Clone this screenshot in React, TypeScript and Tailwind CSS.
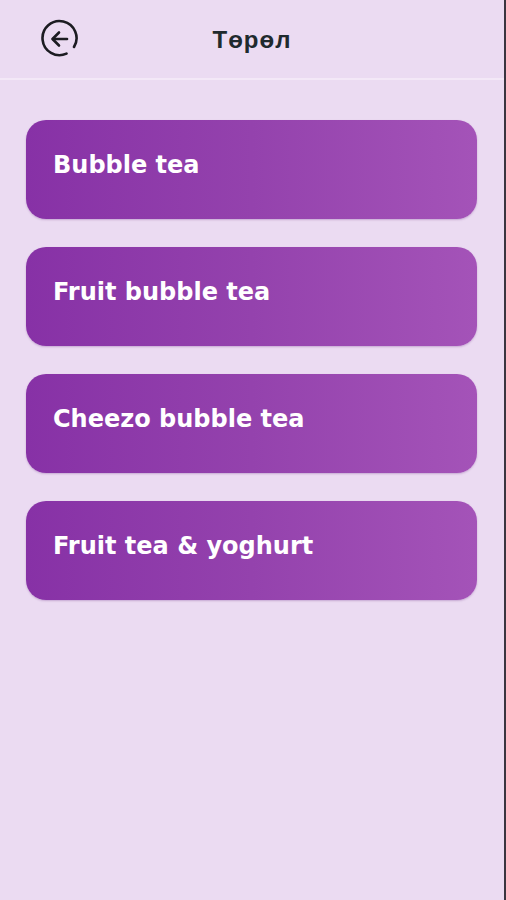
import React from "react";

const items = ["Bubble tea", "Fruit bubble tea", "Cheezo bubble tea", "Fruit tea & yoghurt"];

function BackIcon() {
  return (
    <svg width="40" height="40" viewBox="0 0 40 40" fill="none" stroke="#1c1c22" strokeWidth="2.6" strokeLinecap="round" strokeLinejoin="round">
      <path d="M26.5 34.6 A17 17 0 1 1 34 28" />
      <path d="M27 20 H13" />
      <path d="M19 13.5 L12.5 20 L19 26.5" />
    </svg>
  );
}

export default function App() {
  return (
    <div className="flex min-h-[900px] w-[506px] bg-[#ebdbf2]">
      <div className="flex flex-1 flex-col">
        <header className="relative flex h-[80px] items-center justify-center border-b-2 border-[#f3e8f7] pt-[2px]">
          <div className="absolute left-[40px] top-[19px]">
            <BackIcon />
          </div>
          <h1 className="text-[24px] font-bold tracking-[1px] text-[#1f2a2e]" style={{ fontFamily: '"Liberation Sans", Arial, sans-serif' }}>
            Төрөл
          </h1>
        </header>
        <div className="flex flex-col gap-[28px] pl-[26px] pr-[27px] pt-[40px]">
          {items.map((t) => (
            <div
              key={t}
              className="flex h-[99px] items-center rounded-[20px] bg-gradient-to-r from-[#8731a6] via-[#9442ad] to-[#a453b8] pb-[9px] pl-[27px] shadow-[0_1px_2px_rgba(90,20,120,0.25)]"
            >
              <span className="text-[24px] font-bold text-white" style={{ fontFamily: '"DejaVu Sans", "Noto Sans", sans-serif' }}>
                {t}
              </span>
            </div>
          ))}
        </div>
      </div>
      <div className="w-[2px] bg-[#3a3540]" />
    </div>
  );
}
